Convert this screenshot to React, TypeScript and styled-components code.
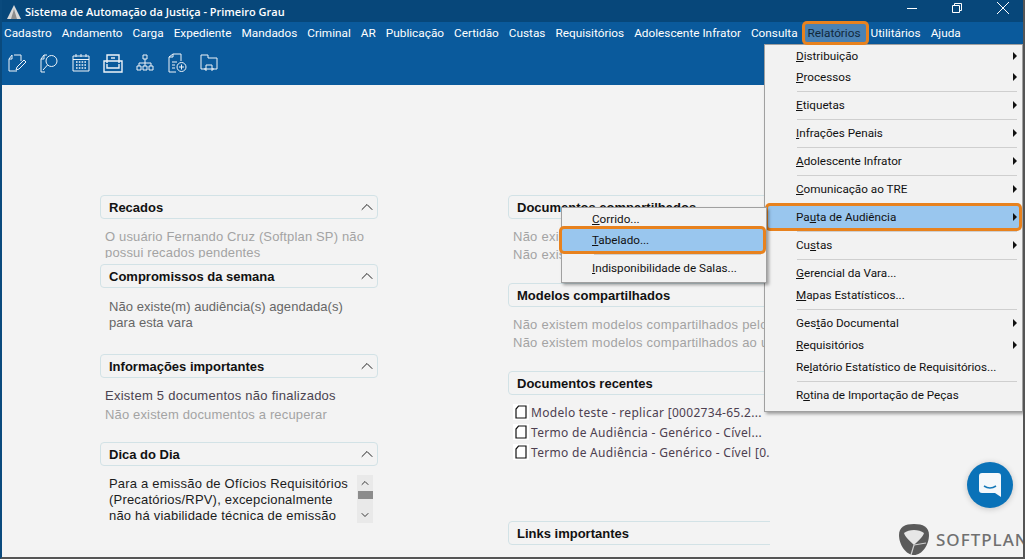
import React from "react"
import styled, { createGlobalStyle } from "styled-components"
import { ChevronUp, ChevronDown } from "lucide-react"

const GlobalStyle = createGlobalStyle`
  html, body {
    margin: 0;
    padding: 0;
    background: #f3f3f3;
  }
  * {
    box-sizing: border-box;
  }
`

const menuBar = [
  "Cadastro", "Andamento", "Carga", "Expediente", "Mandados", "Criminal", "AR", "Publicação",
  "Certidão", "Custas", "Requisitórios", "Adolescente Infrator", "Consulta", "Relatórios", "Utilitários", "Ajuda",
]

type MenuEntry = { label?: string; key?: number; sub?: boolean; active?: boolean; sep?: boolean }

const reportItems: MenuEntry[] = [
  { label: "Distribuição", key: 0, sub: true },
  { label: "Processos", key: 0, sub: true },
  { sep: true },
  { label: "Etiquetas", key: 0, sub: true },
  { sep: true },
  { label: "Infrações Penais", key: 0, sub: true },
  { sep: true },
  { label: "Adolescente Infrator", key: 0, sub: true },
  { sep: true },
  { label: "Comunicação ao TRE", key: 0, sub: true },
  { sep: true },
  { label: "Pauta de Audiência", key: 2, sub: true, active: true },
  { sep: true },
  { label: "Custas", key: 2, sub: true },
  { sep: true },
  { label: "Gerencial da Vara...", key: 0 },
  { label: "Mapas Estatísticos...", key: 0 },
  { sep: true },
  { label: "Gestão Documental", key: 3, sub: true },
  { label: "Requisitórios", key: 0, sub: true },
  { label: "Relatório Estatístico de Requisitórios...", key: 2 },
  { sep: true },
  { label: "Rotina de Importação de Peças", key: 1 },
]

const pautaItems: MenuEntry[] = [
  { label: "Corrido...", key: 0 },
  { label: "Tabelado...", key: 0, active: true },
  { sep: true },
  { label: "Indisponibilidade de Salas...", key: 0 },
]

const Mnemonic = ({ text, at }: { text: string; at: number }) => (
  <span>
    {text.slice(0, at)}
    <u>{text[at]}</u>
    {text.slice(at + 1)}
  </span>
)

const ToolIcon = ({ children }: { children: React.ReactNode }) => (
  <S.ToolSvg viewBox="0 0 20 20" fill="none" stroke="#eef3f8" strokeWidth="1">
    {children}
  </S.ToolSvg>
)

const DocIcon = () => (
  <S.DocBox>
    <svg width="12" height="14" viewBox="0 0 12 14" fill="none" stroke="#111" strokeWidth="1.2">
      <path d="M3.5 1H11V13H1V4Z" />
    </svg>
  </S.DocBox>
)

const Panel = ({ title, children, bodyHeight }: { title: string; children?: React.ReactNode; bodyHeight: number }) => (
  <S.Panel>
    <S.PanelHead>
      <span>{title}</span>
      <ChevronUp size={20} strokeWidth={1.2} color="#222" />
    </S.PanelHead>
    <S.PanelBody $height={bodyHeight}>{children}</S.PanelBody>
  </S.Panel>
)

export default function App() {
  return (
    <S.Window>
      <GlobalStyle />
      <S.TitleBar>
        <svg width="14" height="14" viewBox="0 0 14 14">
          <path d="M7 0L14 14H0Z" fill="#d8d8d8" />
          <path d="M7 4L10 14H4Z" fill="#8d8d8d" />
        </svg>
        <S.TitleText>Sistema de Automação da Justiça - Primeiro Grau</S.TitleText>
        <S.WinButtons>
          <svg width="12" height="12" viewBox="0 0 12 12" stroke="#fff" fill="none">
            <path d="M1 6.5H11" />
          </svg>
          <svg width="12" height="12" viewBox="0 0 12 12" stroke="#fff" fill="none">
            <path d="M1.5 3.5H8.5V10.5H1.5ZM3.5 3.5V1.5H10.5V8.5H8.5" />
          </svg>
          <svg width="14" height="14" viewBox="0 0 14 14" stroke="#fff" fill="none">
            <path d="M1 1L13 13M13 1L1 13" />
          </svg>
        </S.WinButtons>
      </S.TitleBar>

      <S.MenuBar>
        {menuBar.map((m) => (
          <S.MenuBarItem key={m} $on={m === "Relatórios"}>
            {m}
          </S.MenuBarItem>
        ))}
      </S.MenuBar>

      <S.Toolbar>
        <ToolIcon>
          <path d="M7 2H14V8M5 2L2 6V18H10M2 6H5V2" />
          <path d="M9 17L10 14L17 7L19 9L12 16Z" />
        </ToolIcon>
        <ToolIcon>
          <path d="M8 2H5L2 6V19H6M2 6H5V2" />
          <circle cx="12.5" cy="8" r="5.5" />
          <path d="M8.5 12L4 17" />
        </ToolIcon>
        <ToolIcon>
          <path d="M2 3H18V18H2Z" />
          <path d="M5 1V4M10 1V4M15 1V4M2 6.5H18" />
          <path d="M5 9H15M5 12H15M5 15H15" strokeDasharray="1.6 1.2" strokeWidth="1.6" />
        </ToolIcon>
        <ToolIcon>
          <path d="M4 10V2H16V10M1 8H19V19H1ZM4 11V15H16V11" strokeWidth="1.4" />
          <path d="M8 5H12" strokeWidth="1.4" />
        </ToolIcon>
        <ToolIcon>
          <path d="M8 2H12V6H8ZM10 6V10M4 10H16M4 10V13M10 10V13M16 10V13M2 13H6V17H2ZM8 13H12V17H8ZM14 13H18V17H14Z" />
        </ToolIcon>
        <ToolIcon>
          <path d="M6 1H14V8M6 1L2 4V19H9M2 4H6V1M5 9H10M5 12H8M5 15H8" />
          <circle cx="14.5" cy="14" r="4.5" />
          <path d="M14.5 11.5V16.5M12 14H17" />
        </ToolIcon>
        <ToolIcon>
          <path d="M2 2H9V5H18V16H13V12H7V16H2ZM7 16V18M13 16V18M5 16H15" />
        </ToolIcon>
      </S.Toolbar>

      <S.Content>
        <S.LeftColumn>
          <Panel title="Recados" bodyHeight={39}>
            <S.Muted>O usuário Fernando Cruz (Softplan SP) não possui recados pendentes</S.Muted>
          </Panel>
          <S.PanelGap $size={6} />
          <Panel title="Compromissos da semana" bodyHeight={66}>
            <S.Indented>
              Não existe(m) audiência(s) agendada(s)
              <br />
              para esta vara
            </S.Indented>
          </Panel>
          <Panel title="Informações importantes" bodyHeight={64}>
            <S.Line>Existem 5 documentos não finalizados</S.Line>
            <S.MutedLine>Não existem documentos a recuperar</S.MutedLine>
          </Panel>
          <Panel title="Dica do Dia" bodyHeight={90}>
            <S.TipRow>
              <S.TipText>
                Para a emissão de Ofícios Requisitórios
                <br />
                (Precatórios/RPV), excepcionalmente
                <br />
                não há viabilidade técnica de emissão
              </S.TipText>
              <S.ScrollTrack>
                <ChevronUp size={12} strokeWidth={1.8} color="#222" />
                <S.ScrollThumb />
                <ChevronDown size={12} strokeWidth={1.8} color="#222" />
              </S.ScrollTrack>
            </S.TipRow>
          </Panel>
        </S.LeftColumn>

        <S.RightColumn>
          <Panel title="Documentos compartilhados" bodyHeight={64}>
            <S.MutedClip>Não existem documentos compartilhados pelo usuário</S.MutedClip>
            <S.MutedClip>Não existem documentos compartilhados ao usuário</S.MutedClip>
          </Panel>
          <Panel title="Modelos compartilhados" bodyHeight={64}>
            <S.MutedClip>Não existem modelos compartilhados pelo usuário</S.MutedClip>
            <S.MutedClip>Não existem modelos compartilhados ao usuário</S.MutedClip>
          </Panel>
          <Panel title="Documentos recentes" bodyHeight={126}>
            <S.DocList>
              <S.DocRow>
                <DocIcon />
                Modelo teste - replicar [0002734-65.2...
              </S.DocRow>
              <S.DocRow>
                <DocIcon />
                Termo de Audiência - Genérico - Cível...
              </S.DocRow>
              <S.DocRow>
                <DocIcon />
                Termo de Audiência - Genérico - Cível [0.
              </S.DocRow>
            </S.DocList>
          </Panel>
          <Panel title="Links importantes" bodyHeight={12} />
        </S.RightColumn>
      </S.Content>

      <S.ReportsMenu>
        {reportItems.map((it, i) =>
          it.sep ? (
            <S.Separator key={i} />
          ) : (
            <S.MenuRow key={i} $active={it.active} $text={31}>
              <Mnemonic text={it.label!} at={it.key!} />
              {it.sub && <S.Arrow $active={it.active} />}
            </S.MenuRow>
          ),
        )}
      </S.ReportsMenu>

      <S.PautaMenu>
        {pautaItems.map((it, i) =>
          it.sep ? (
            <S.Separator key={i} />
          ) : (
            <S.MenuRow key={i} $active={it.active} $text={30} $flush>
              <Mnemonic text={it.label!} at={it.key!} />
            </S.MenuRow>
          ),
        )}
      </S.PautaMenu>

      <S.ChatBubble>
        <svg width="24" height="26" viewBox="0 0 24 26">
          <path d="M4 1H20A3 3 0 0 1 23 4V25L17 21H4A3 3 0 0 1 1 18V4A3 3 0 0 1 4 1Z" fill="#f4f8fb" />
          <path d="M6 14Q12 18 18 14" fill="none" stroke="#1478b8" strokeWidth="1.6" />
        </svg>
      </S.ChatBubble>

      <S.Brand>
        <svg width="32" height="33" viewBox="0 0 32 33">
          <path d="M16 1C25 1 31 4 31 12C31 22 24 32 16 32C8 32 1 22 1 12C1 4 7 1 16 1Z" fill="#5a5a5a" />
          <path d="M6 10C11 6 21 6 26 10C25 14 20 18 16 22C12 18 7 14 6 10Z" fill="#e6e6e6" />
          <path d="M16 22L13 32M16 22L28 20" stroke="#cfcfcf" strokeWidth="1.2" />
        </svg>
        <S.BrandName>SOFTPLAN</S.BrandName>
      </S.Brand>
    </S.Window>
  )
}

const S = {
  Window: styled.div`
    position: relative;
    width: 1025px;
    height: 559px;
    overflow: hidden;
    background: #f3f3f3;
    border-left: 2px solid #0a4a7d;
    border-right: 2px solid #555;
    border-bottom: 2px solid #555;
    font-family: "Liberation Sans", Arial, sans-serif;
  `,
  TitleBar: styled.div`
    display: flex;
    align-items: center;
    gap: 4px;
    height: 22px;
    padding: 1px 0 0 5px;
    background: #07477a;
  `,
  TitleText: styled.span`
    color: #fff;
    font: 600 11px "Open Sans", sans-serif;
    white-space: nowrap;
  `,
  WinButtons: styled.div`
    display: flex;
    align-items: center;
    gap: 33px;
    margin-left: auto;
    margin-top: -7px;
    padding-right: 13px;
  `,
  MenuBar: styled.div`
    display: flex;
    height: 22px;
    margin-left: -3px;
    background: #0a5a9c;
    box-shadow: 3px 0 0 #0a5a9c;
  `,
  MenuBarItem: styled.div<{ $on?: boolean }>`
    display: flex;
    align-items: center;
    margin: ${(p) => (p.$on ? "2px 0 2px 2px" : "0")};
    padding: ${(p) => (p.$on ? "0 5px 0 3px" : "0 5px")};
    color: ${(p) => (p.$on ? "#10283c" : "#fff")};
    font: 11.8px Roboto, sans-serif;
    white-space: nowrap;
    background: ${(p) => (p.$on ? "#4a82b4" : "transparent")};
    box-shadow: ${(p) => (p.$on ? "0 0 0 3px #e8821e" : "none")};
    border-radius: 2px;
    z-index: ${(p) => (p.$on ? 3 : 0)};
  `,
  Toolbar: styled.div`
    display: flex;
    align-items: center;
    gap: 12px;
    height: 41px;
    padding: 0 0 3px 5px;
    background: #0a5a9c;
  `,
  ToolSvg: styled.svg`
    width: 20px;
    height: 20px;
    flex: none;
  `,
  Content: styled.div`
    display: flex;
    gap: 130px;
    padding: 110px 0 0 98px;
  `,
  LeftColumn: styled.div`
    display: flex;
    flex-direction: column;
    width: 278px;
  `,
  RightColumn: styled.div`
    display: flex;
    flex-direction: column;
    width: 262px;
    overflow: hidden;

    & > section {
      width: 290px;
    }
  `,
  Panel: styled.section`
    display: flex;
    flex-direction: column;
    flex: none;
  `,
  PanelGap: styled.div<{ $size: number }>`
    height: ${(p) => p.$size}px;
    flex: none;
  `,
  PanelHead: styled.div`
    display: flex;
    align-items: center;
    justify-content: space-between;
    height: 24px;
    padding: 0 0 0 8px;
    border: 1px solid #d2e2e6;
    border-radius: 4px;
    color: #111;
    font: bold 13px "Liberation Sans", Arial, sans-serif;
  `,
  PanelBody: styled.div<{ $height: number }>`
    height: ${(p) => p.$height}px;
    padding: 9px 0 0 5px;
    font-size: 13px;
    line-height: 18px;
    letter-spacing: 0.15px;
    overflow: hidden;
  `,
  Muted: styled.div`
    color: #a3a3a3;
    line-height: 16px;
    width: 268px;
    padding-top: 1px;
  `,
  MutedLine: styled.div`
    color: #a3a3a3;
    padding-top: 1px;
  `,
  MutedClip: styled.div`
    color: #a3a3a3;
    white-space: nowrap;
    letter-spacing: 0.25px;
  `,
  Line: styled.div`
    color: #4a4350;
    letter-spacing: 0.25px;
  `,
  Indented: styled.div`
    padding: 2px 0 0 4px;
    color: #666;
    line-height: 16px;
    letter-spacing: 0.05px;
  `,
  TipRow: styled.div`
    display: flex;
    justify-content: space-between;
    padding: 0 5px 0 4px;
  `,
  TipText: styled.div`
    padding-top: 1px;
    color: #1c1c1c;
    line-height: 16px;
    letter-spacing: 0.2px;
    white-space: nowrap;
  `,
  ScrollTrack: styled.div`
    display: flex;
    flex-direction: column;
    align-items: center;
    justify-content: space-between;
    flex: none;
    width: 16px;
    height: 48px;
    padding: 2px 0;
    background: #e9e9e9;
  `,
  ScrollThumb: styled.div`
    width: 15px;
    height: 8px;
    margin-bottom: 8px;
    background: #8c8c8c;
  `,
  DocList: styled.div`
    margin-top: -2px;
  `,
  DocRow: styled.div`
    display: flex;
    align-items: center;
    gap: 2px;
    height: 20px;
    color: #4d4050;
    font: 12px "Noto Sans", sans-serif;
    letter-spacing: 0.3px;
    white-space: nowrap;
  `,
  DocBox: styled.span`
    display: flex;
    align-items: center;
    justify-content: center;
    flex: none;
    width: 16px;
    height: 16px;
    background: #fff;
  `,
  ReportsMenu: styled.div`
    position: absolute;
    top: 44px;
    left: 762px;
    width: 259px;
    padding: 0 0 5px;
    background: #f2f2f2;
    border: 1px solid #a0a0a0;
    box-shadow: 2px 2px 3px rgba(0, 0, 0, 0.35);
    z-index: 2;
  `,
  PautaMenu: styled.div`
    position: absolute;
    top: 207px;
    left: 559px;
    width: 206px;
    padding: 0 0 3px;
    background: #f2f2f2;
    border: 1px solid #a0a0a0;
    box-shadow: 2px 2px 3px rgba(0, 0, 0, 0.35);
    z-index: 4;
  `,
  MenuRow: styled.div<{ $active?: boolean; $text: number; $flush?: boolean }>`
    position: relative;
    display: flex;
    align-items: center;
    height: 22px;
    margin: ${(p) => (p.$active ? `0 3px 0 ${p.$flush ? 0 : 3}px` : "0")};
    padding-left: ${(p) => (p.$active && !p.$flush ? p.$text - 3 : p.$text)}px;
    color: #111;
    font: 11.7px Roboto, sans-serif;
    white-space: nowrap;
    background: ${(p) => (p.$active ? "#99c6ee" : "transparent")};
    box-shadow: ${(p) => (p.$active ? "0 0 0 3px #e8821e" : "none")};
    border-radius: ${(p) => (p.$active ? "2px" : "0")};
    z-index: ${(p) => (p.$active ? 1 : 0)};

    &:first-child {
      height: 21px;
    }
  `,
  Arrow: styled.span<{ $active?: boolean }>`
    position: absolute;
    right: ${(p) => (p.$active ? 2 : 5)}px;
    top: 7px;
    border-left: 4px solid #111;
    border-top: 4px solid transparent;
    border-bottom: 4px solid transparent;
  `,
  Separator: styled.div`
    height: 1px;
    margin: 3px 5px 2px 32px;
    background: #cfcfcf;
  `,
  ChatBubble: styled.div`
    position: absolute;
    left: 965px;
    top: 462px;
    display: flex;
    align-items: center;
    justify-content: center;
    width: 46px;
    height: 46px;
    border-radius: 50%;
    background: #0a72b8;
    box-shadow: 0 1px 6px rgba(0, 0, 0, 0.2);
  `,
  Brand: styled.div`
    position: absolute;
    left: 896px;
    top: 523px;
    display: flex;
    align-items: center;
    gap: 6px;
  `,
  BrandName: styled.span`
    color: #707070;
    font: 500 17px "Noto Sans", sans-serif;
    letter-spacing: 1px;
  `,
}
